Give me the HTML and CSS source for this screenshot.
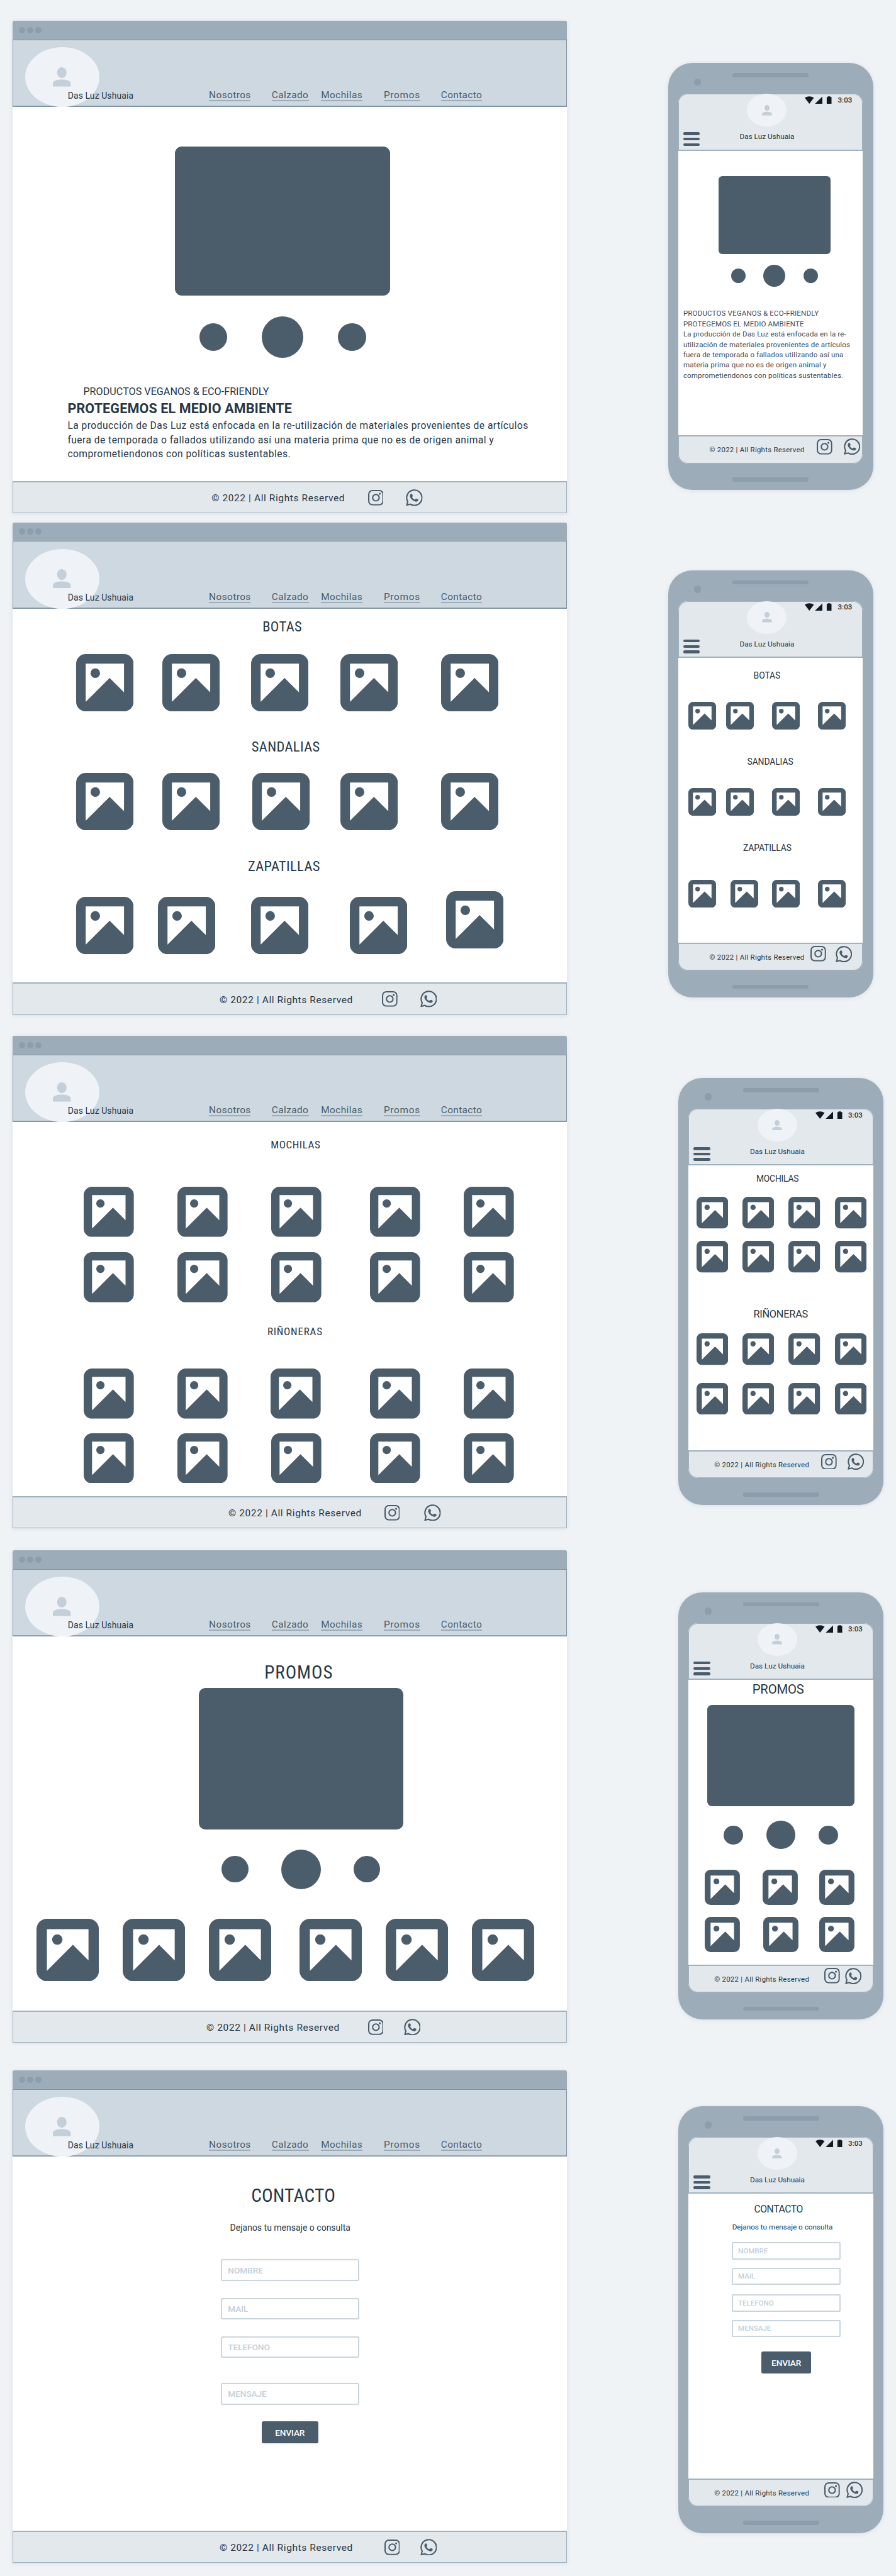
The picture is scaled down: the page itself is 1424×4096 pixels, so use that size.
FILE: index.html
```html
<!DOCTYPE html>
<html lang="es">
<head>
<meta charset="utf-8">
<title>Das Luz Ushuaia</title>
<link rel="stylesheet" href="styles.css">
</head>
<body>
<svg class="sprite" width="0" height="0" aria-hidden="true">
  <symbol id="picture" viewBox="0 0 24 24"><path fill="currentColor" fill-rule="evenodd" d="M4 0H20A4 4 0 0 1 24 4V20A4 4 0 0 1 20 24H4A4 4 0 0 1 0 20V4A4 4 0 0 1 4 0ZM4 4V20L14 10L20 16V4ZM8 6A2 2 0 1 1 8 10A2 2 0 1 1 8 6Z"/></symbol>
  <symbol id="person" viewBox="0 0 28 30"><path fill="currentColor" d="M14 0C18.200 0 21.300 3.500 21.300 8.200S18.200 16.500 14 16.500 6.700 13 6.700 8.200 9.800 0 14 0ZM0 30V25.500C0 20.500 7 19 14 19S28 20.500 28 25.500V30Z"/></symbol>
  <symbol id="instagram" viewBox="0 0 24 24"><rect x="1" y="1" width="22" height="22" rx="5.800" fill="none" stroke="currentColor" stroke-width="2"/><circle cx="12" cy="12" r="5" fill="none" stroke="currentColor" stroke-width="2"/><circle cx="18" cy="5.900" r="1.500" fill="currentColor"/></symbol>
  <symbol id="whatsapp" viewBox="0 0 24 24"><path fill="none" stroke="currentColor" stroke-width="1.900" d="M2.700 17.600A11 11 0 1 1 6.500 21.500L1.400 22.700Z"/><path fill="currentColor" d="M6.400 7.500Q7.600 6.200 8.800 6.900C9.800 7.800 10.200 9.600 9.600 10.500L9 11.300C9.800 13 11 14.200 12.800 15L13.800 14.100C14.800 13.200 17 13.800 17.900 14.900C18 16.500 16.600 17.900 14.600 17.800C10 17.400 6 13 5.800 9.600Z"/></symbol>
  <symbol id="status" viewBox="0 0 43 12"><path fill="#111a22" d="M0 2.600Q7.250 -2 14.500 2.600L7.250 12ZM28 .4V12H16.300ZM34.900 1.200H36.600V.3H40.700V1.200H42.500V12H34.900Z"/></symbol>
</svg>

<template id="browser-top">
  <div class="titlebar"><i></i><i></i><i></i></div>
  <header class="site-header">
    <div class="avatar"><svg><use href="#person"/></svg></div>
    <span class="brand">Das Luz Ushuaia</span>
    <nav><a>Nosotros</a><a>Calzado</a><a>Mochilas</a><a>Promos</a><a>Contacto</a></nav>
  </header>
</template>
<template id="phone-top">
  <header class="app-header">
    <div class="menu"><i></i><i></i><i></i></div>
    <div class="app-brand"><div class="avatar"><svg><use href="#person"/></svg></div><span>Das Luz Ushuaia</span></div>
    <div class="status"><svg><use href="#status"/></svg><span>3:03</span></div>
  </header>
</template>
<template id="page-footer">
  <footer><span>© 2022 | All Rights Reserved</span><svg class="ig"><use href="#instagram"/></svg><svg class="wa"><use href="#whatsapp"/></svg></footer>
</template>

<div class="board">
  <section class="browser d1"><main>
    <div class="slide"></div>
    <div class="dots"><i></i><i></i><i></i></div>
    <p class="kicker">PRODUCTOS VEGANOS &amp; ECO-FRIENDLY</p>
    <h1>PROTEGEMOS EL MEDIO AMBIENTE</h1>
    <p class="copy">La producción de Das Luz está enfocada en la re-utilización de materiales provenientes de artículos<br>fuera de temporada o fallados utilizando así una materia prima que no es de origen animal y<br>comprometiendonos con políticas sustentables.</p>
  </main></section>

  <section class="browser d2"><main>
    <h2 class="t1">BOTAS</h2><div class="row r1" data-count="5"></div>
    <h2 class="t2">SANDALIAS</h2><div class="row r2" data-count="5"></div>
    <h2 class="t3">ZAPATILLAS</h2><div class="row r3" data-count="5"></div>
  </main></section>

  <section class="browser d3"><main>
    <h2 class="t1">MOCHILAS</h2><div class="row r1" data-count="5"></div><div class="row r2" data-count="5"></div>
    <h2 class="t2">RIÑONERAS</h2><div class="row r3" data-count="5"></div><div class="row r4" data-count="5"></div>
  </main></section>

  <section class="browser d4"><main>
    <h2>PROMOS</h2>
    <div class="slide"></div>
    <div class="dots"><i></i><i></i><i></i></div>
    <div class="row" data-count="6"></div>
  </main></section>

  <section class="browser d5"><main>
    <h2>CONTACTO</h2>
    <p class="lead">Dejanos tu mensaje o consulta</p>
    <form><div class="field">NOMBRE</div><div class="field">MAIL</div><div class="field">TELEFONO</div><div class="field">MENSAJE</div><div class="send">ENVIAR</div></form>
  </main></section>

  <section class="phone p1"><div class="screen"><main>
    <div class="slide"></div>
    <div class="dots"><i></i><i></i><i></i></div>
    <p class="copy">PRODUCTOS VEGANOS &amp; ECO-FRIENDLY<br>PROTEGEMOS EL MEDIO AMBIENTE<br>La producción de Das Luz está enfocada en la re-<br>utilización de materiales provenientes de artículos<br>fuera de temporada o fallados utilizando así una<br>materia prima que no es de origen animal y<br>comprometiendonos con políticas sustentables.</p>
  </main></div></section>

  <section class="phone p2"><div class="screen"><main>
    <h2 class="t1">BOTAS</h2><div class="row r1" data-count="4"></div>
    <h2 class="t2">SANDALIAS</h2><div class="row r2" data-count="4"></div>
    <h2 class="t3">ZAPATILLAS</h2><div class="row r3" data-count="4"></div>
  </main></div></section>

  <section class="phone p3"><div class="screen"><main>
    <h2 class="t1">MOCHILAS</h2><div class="row r1" data-count="4"></div><div class="row r2" data-count="4"></div>
    <h2 class="t2">RIÑONERAS</h2><div class="row r3" data-count="4"></div><div class="row r4" data-count="4"></div>
  </main></div></section>

  <section class="phone p4"><div class="screen"><main>
    <h2>PROMOS</h2>
    <div class="slide"></div>
    <div class="dots"><i></i><i></i><i></i></div>
    <div class="row r1" data-count="3"></div><div class="row r2" data-count="3"></div>
  </main></div></section>

  <section class="phone p5"><div class="screen"><main>
    <h2>CONTACTO</h2>
    <p class="lead">Dejanos tu mensaje o consulta</p>
    <form><div class="field">NOMBRE</div><div class="field">MAIL</div><div class="field">TELEFONO</div><div class="field">MENSAJE</div><div class="send">ENVIAR</div></form>
  </main></div></section>
</div>
<script src="frames.js"></script>
</body>
</html>
```
FILE: styles.css
```css
:root {
  --dark: #4b5c6a;
  --ink: #273746;
  --bar: #9dacb9;
  --shade: #8c9dac;
  --pale: #e2e8ec;
  --line: #a0b1bf;
}
* { box-sizing: border-box; }
body {
  margin: 0;
  background: #eff3f6;
  color: var(--ink);
  font-family: Roboto, "Open Sans", sans-serif;
  white-space: nowrap;
}
h1, h2, p { margin: 0; font-weight: 400; }
i { display: block; }
svg { display: block; color: var(--dark); }
.sprite { position: absolute; }
.board { position: relative; width: 1424px; height: 4096px; overflow: hidden; }
main { display: flex; flex-direction: column; flex: 1; background: #fff; min-height: 0; }
.row { display: grid; }
.row svg { width: var(--pic); height: var(--pic); }
.slide { background: var(--dark); flex: none; }
.dots { display: flex; align-items: center; }
.dots i { width: var(--dot); height: var(--dot); border-radius: 50%; background: var(--dark); }
.dots i:nth-child(2) { width: var(--big); height: var(--big); }
.avatar { display: flex; align-items: center; justify-content: center; background: #eff3f7; border-radius: 50%; }
.avatar svg { color: #c3cfd9; }
footer { display: grid; align-items: center; background: var(--pale); border: 1px solid var(--line); border-top-width: 2px; flex: none; }
form { display: flex; flex-direction: column; }
.field { display: flex; align-items: center; border: 2px solid #cad4dd; border-radius: 3px; color: #c3cfda; font-weight: 500; flex: none; background: #fff; }
.send { display: flex; align-items: center; justify-content: center; background: var(--dark); color: #fff; border-radius: 3px; font-weight: 500; font-size: 13.600px; letter-spacing: -.1px; flex: none; }

/* Desktop windows */
.browser {
  position: absolute; left: 20.400px; width: 881px; height: 783.200px;
  display: flex; flex-direction: column;
  border-radius: 3px 3px 0 0; overflow: hidden;
  box-shadow: 0 1px 6px rgba(75, 92, 106, .13);
}
.d1 { top: 33.300px; } .d2 { top: 830.700px; } .d3 { top: 1647.200px; } .d4 { top: 2465.200px; } .d5 { top: 3292.200px; }
.titlebar { height: 29.500px; background: var(--bar); display: flex; align-items: center; gap: 3.100px; padding-left: 9.600px; flex: none; }
.titlebar i { width: 10px; height: 10px; border-radius: 50%; background: var(--shade); }
.site-header {
  height: 107.500px; flex: none;
  display: flex; background: #cdd8e1;
  box-shadow: inset 0 0 0 1px #7f92a1, inset 0 -1.800px 0 #7f92a1;
}
.site-header .avatar { width: 118px; height: 95px; margin: 12.400px 0 0 19.200px; }
.site-header .avatar svg { width: 28.600px; height: 30.700px; }
.brand { width: 120px; margin: 79.500px 0 0 -49.800px; font-size: 14px; line-height: 20px; letter-spacing: .07px; }
nav { display: flex; gap: 33.300px; margin: 78.500px 0 0 104.300px; height: 20px; }
nav a { height: 20px; color: var(--dark); font-size: 15.400px; line-height: 20.500px; letter-spacing: .42px; border-bottom: 2px solid var(--bar); }
nav a:nth-child(1) { width: 66.400px; }
nav a:nth-child(2) { width: 58.900px; }
nav a:nth-child(3) { width: 65.800px; margin-left: -13.800px; }
nav a:nth-child(4) { width: 58.300px; letter-spacing: .7px; margin-left: .7px; }
nav a:nth-child(5) { width: 65.300px; margin-left: -.7px; letter-spacing: .35px; }
.browser footer { height: 51.400px; font-size: 15.500px; letter-spacing: .6px; }
.browser footer span { padding-top: 2px; }
.browser .ig { width: 24.800px; height: 24.800px; }
.browser .wa { width: 26.500px; height: 26.500px; }
.d1 footer { padding-left: 314.800px; grid-template-columns: 248.500px 60.700px 26.500px; }
.d2 footer { padding-left: 327.600px; grid-template-columns: 257.900px 60.900px 26.500px; }
.d3 footer { padding-left: 341.600px; grid-template-columns: 247.700px 63.500px 26.500px; }
.d4 footer { padding-left: 306.700px; grid-template-columns: 256.600px 56.900px 26.500px; }
.d5 footer { padding-left: 327.600px; grid-template-columns: 261.700px 57.100px 26.500px; }
.browser h2 { font-stretch: 75%; }

.d1 .slide { width: 341.500px; height: 236.800px; margin: 62.900px 0 0 258.100px; border-radius: 11px; }
.d1 .dots { --dot: 44.200px; --big: 66.200px; gap: 55px; margin: 33px 0 0 296.600px; }
.kicker { margin: 41.600px 0 0 112px; font-size: 16.200px; line-height: 24px; }
.d1 h1 { margin: 1.900px 0 0 87px; font-size: 21.500px; line-height: 26px; font-weight: 700; letter-spacing: .16px; }
.d1 .copy { margin: 3.200px 0 0 87px; font-size: 15.600px; line-height: 22.730px; letter-spacing: .46px; }

.d2 { --pic: 91.300px; }
.d2 h2 { font-size: 22.500px; line-height: 30px; letter-spacing: .4px; }
.d2 .t1 { margin: 13.700px 0 0 396.800px; }
.d2 .t2 { margin: 40.500px 0 0 379.300px; }
.d2 .t3 { margin: 41.700px 0 0 373.500px; }
.d2 .row { padding-left: 100.800px; }
.d2 .r1 { margin-top: 28.700px; grid-template-columns: 136.400px 141px 142.200px 160.200px 91.300px; }
.d2 .r2 { margin-top: 26.900px; grid-template-columns: 136.400px 143.900px 139.300px 160.200px 91.300px; }
.d2 .r3 { margin-top: 34.500px; grid-template-columns: 130px 147.400px 157.300px 152.700px 91.300px; }
.d2 .r3 svg:last-child { margin-top: -9px; }

.d3 { --pic: 79.800px; }
.d3 h2 { font-size: 17px; line-height: 24px; letter-spacing: .6px; }
.d3 .t1 { margin: 24px 0 0 409.800px; }
.d3 .t2 { margin: 34.100px 0 0 404.500px; letter-spacing: .8px; }
.d3 .row { padding-left: 112.500px; grid-template-columns: 149.400px 148.900px 156.700px 149.500px 79.800px; }
.d3 .r1 { margin-top: 54.600px; }
.d3 .r2 { margin-top: 24.800px; }
.d3 .r3 { margin-top: 46.600px; grid-template-columns: 149.400px 147.700px 157.900px 149.500px 79.800px; }
.d3 .r4 { margin-top: 23px; }

.d4 { --pic: 99.200px; }
.d4 h2 { margin: 39.300px 0 0 399.800px; font-size: 29px; line-height: 36px; letter-spacing: 1px; }
.d4 .slide { width: 325.200px; height: 225.700px; margin: 6.200px 0 0 295.400px; border-radius: 10.500px; }
.d4 .dots { --dot: 42.200px; --big: 63.200px; gap: 52.200px; margin: 31.400px 0 0 332px; }
.d4 .row { margin-top: 46.600px; padding-left: 37.900px; grid-template-columns: 136.600px 136.900px 144.600px 136.900px 136.900px 99.200px; }

.d5 h2 { margin: 43.800px 0 0 378.800px; font-size: 29.500px; line-height: 36px; letter-spacing: .2px; }
.d5 .lead { margin: 23.200px 0 0 345.200px; font-size: 14px; line-height: 20px; }
.d5 form { margin: 40.200px 0 0 330.400px; width: 220.300px; }
.d5 .field { height: 34.300px; margin-bottom: 27px; padding-left: 9.500px; font-size: 13.700px; letter-spacing: -.1px; }
.d5 .field:nth-child(3) { margin-bottom: 40.100px; }
.d5 .send { width: 89.700px; height: 34.600px; margin: -.4px 0 0 65.200px; }

/* Phones */
.phone {
  position: absolute; left: 1061.500px; width: 326.200px; height: 679px;
  padding: 49px 16.400px 42.800px; border-radius: 38px; background: var(--bar);
  display: flex; box-shadow: 0 1px 6px rgba(75, 92, 106, .13);
}
.p1 { top: 100.300px; } .p2 { top: 906.900px; } .p3 { top: 1714.100px; } .p4 { top: 2531.900px; } .p5 { top: 3349.100px; }
.p3, .p4, .p5 { left: 1078px; }
.speaker, .camera { position: absolute; background: var(--shade); }
.speaker { left: 102.600px; width: 121px; height: 6.400px; border-radius: 3.200px; top: 16.200px; }
.speaker.low { top: 659.200px; }
.camera { left: 41.600px; top: 24.400px; width: 11.400px; height: 11.400px; border-radius: 50%; }
.screen { width: 293.400px; display: flex; flex-direction: column; border-radius: 15px; overflow: hidden; background: #fff; }
.app-header {
  height: 90.300px; flex: none; display: grid; grid-template-columns: 96.500px 104px 1fr;
  background: var(--pale); border: 1px solid var(--line); border-bottom-width: 2px;
  border-radius: 15px 15px 0 0;
}
.menu { display: flex; flex-direction: column; gap: 4.200px; padding: 60px 0 0 7px; }
.menu i { width: 26.300px; height: 4.500px; border-radius: 2.250px; background: var(--dark); }
.app-brand { display: flex; flex-direction: column; align-items: flex-start; }
.app-brand .avatar { width: 63.400px; height: 52px; margin: -1px 0 0 11.700px; }
.app-brand svg { width: 16px; height: 16.800px; }
.app-brand span { font-size: 11.800px; line-height: 16px; margin-top: 7.800px; }
.status { display: flex; gap: 9.200px; padding-top: 2.600px; }
.status svg { width: 43px; height: 12px; flex: none; }
.status span { font-size: 11.500px; line-height: 12px; font-weight: 500; color: #2b343c; }
.phone footer { height: 44.400px; font-size: 11.400px; letter-spacing: .27px; align-items: start; border-radius: 0 0 15px 15px; }
.phone footer span { line-height: 16px; padding-top: 13px; }
.phone .ig { width: 24.800px; height: 24.800px; margin-top: 3.600px; }
.phone .wa { width: 26px; height: 26px; margin-top: 3px; }
.p1 footer { padding-left: 48.600px; grid-template-columns: 170.400px 43.100px 26px; }
.p2 footer { padding-left: 48.600px; grid-template-columns: 160.600px 40.100px 26px; }
.p3 footer { padding-left: 39.800px; grid-template-columns: 169.600px 42.600px 26px; }
.p4 footer { padding-left: 39.800px; grid-template-columns: 174.600px 33.600px 26px; }
.p5 footer { padding-left: 39.800px; grid-template-columns: 174.600px 35.100px 26px; }

.p1 .slide { width: 178.600px; height: 123.700px; margin: 40.600px 0 0 63.900px; border-radius: 6px; }
.p1 .dots { --dot: 23.300px; --big: 35px; gap: 28.200px; margin: 17px 0 0 84px; }
.p1 .copy { margin: 34.600px 0 0 8px; font-size: 11.500px; line-height: 16.350px; letter-spacing: .18px; color: #3a4a59; }

.p2 { --pic: 44.200px; }
.p2 h2 { font-size: 13.900px; line-height: 20px; letter-spacing: -.1px; }
.p2 .t1 { margin: 17.900px 0 0 119.700px; }
.p2 .t2 { margin: 40.800px 0 0 109.600px; }
.p2 .t3 { margin: 40.800px 0 0 103px; }
.p2 .row { padding-left: 16px; grid-template-columns: 60.400px 72.700px 72.700px 44.200px; }
.p2 .r1, .p2 .r2 { margin-top: 32.200px; }
.p2 .r3 { margin-top: 40.400px; grid-template-columns: 66.900px 66.200px 72.700px 44.200px; }

.p3 { --pic: 50.400px; }
.p3 .t1 { margin: 11.100px 0 0 107.600px; font-size: 13.800px; line-height: 20px; letter-spacing: -.2px; }
.p3 .t2 { margin: 53.900px 0 0 103px; font-size: 16.400px; line-height: 24px; letter-spacing: -.27px; }
.p3 .row { padding-left: 12.300px; grid-template-columns: repeat(4, 73.400px); }
.p3 .r1, .p3 .r3 { margin-top: 18.800px; }
.p3 .r2 { margin-top: 19.700px; }
.p3 .r4 { margin-top: 27.700px; }

.p4 { --pic: 55.900px; }
.p4 h2 { margin: 1.100px 0 0 101.300px; font-size: 20.300px; line-height: 28px; letter-spacing: -.15px; }
.p4 .slide { width: 233.500px; height: 161.900px; margin: 10.300px 0 0 30px; border-radius: 7.500px; }
.p4 .dots { --dot: 30.400px; --big: 45.400px; gap: 37.500px; margin: 22.600px 0 0 56px; }
.p4 .row { padding-left: 25.900px; }
.p4 .r1 { margin-top: 32.500px; grid-template-columns: 91.600px 90.400px 55.900px; }
.p4 .r2 { margin-top: 18.900px; grid-template-columns: 93.100px 88.900px 55.900px; }

.p5 h2 { margin: 13px 0 0 104px; font-size: 15.700px; line-height: 24px; letter-spacing: -.4px; }
.p5 .lead { margin: 8.100px 0 0 69.300px; font-size: 11.700px; line-height: 16px; }
.p5 form { margin: 15.800px 0 0 68.700px; width: 172.600px; }
.p5 .field { height: 27.700px; margin-bottom: 12.600px; padding-left: 8px; font-size: 11.500px; border-radius: 2px; }
.p5 .field:nth-child(2) { margin-bottom: 14.900px; }
.p5 .field:nth-child(3) { margin-bottom: 12.800px; }
.p5 .send { width: 79.700px; height: 34.600px; margin: 10.300px 0 0 46.700px; }
```
FILE: frames.js
```
// Adds the shared chrome (header, footer, bezel) to every frame and fills the picture rows.
const copy = (id) => document.getElementById(id).content.cloneNode(true);

document.querySelectorAll('.browser').forEach((frame) => {
  frame.prepend(copy('browser-top'));
  frame.append(copy('page-footer'));
});

document.querySelectorAll('.phone').forEach((frame) => {
  const screen = frame.querySelector('.screen');
  screen.prepend(copy('phone-top'));
  screen.append(copy('page-footer'));
  frame.insertAdjacentHTML('beforeend', '<i class="speaker"></i><i class="camera"></i><i class="speaker low"></i>');
});

document.querySelectorAll('.row').forEach((row) => {
  row.innerHTML = '<svg><use href="#picture"/></svg>'.repeat(Number(row.dataset.count));
});
```
